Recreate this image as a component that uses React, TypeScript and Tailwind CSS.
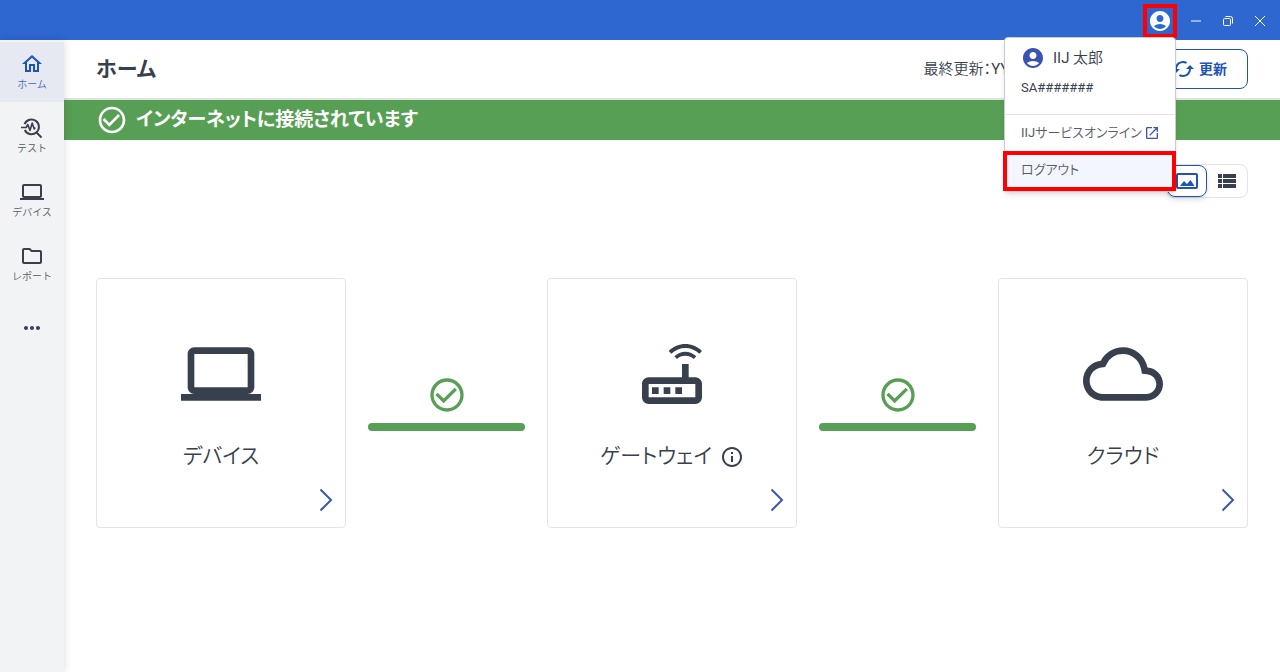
import React from 'react';
import {
  MdAccountCircle,
  MdCheckCircleOutline,
  MdInfoOutline,
  MdMoreHoriz,
  MdOpenInNew,
  MdOutlineCloud,
  MdOutlineFolder,
  MdOutlineHome,
  MdOutlineLaptop,
  MdOutlineRouter,
} from 'react-icons/md';

const DiagnoseIcon = ({ className }: { className?: string }) => (
  <svg viewBox="0 0 24 24" className={className} fill="none" stroke="currentColor" strokeWidth="2" aria-hidden="true">
    <path d="M4.6 8.2A7.4 7.4 0 1 1 4.8 14" />
    <path d="M16.5 16.5 21.5 21.5" />
    <path d="M1 11.5h5.2l1.6-3 2.2 6 2.2-7.5 2 6 1-1.5" strokeWidth="1.6" strokeLinejoin="round" />
  </svg>
);

const SyncIcon = ({ className }: { className?: string }) => (
  <svg viewBox="0 0 24 24" className={className} fill="currentColor" aria-hidden="true">
    <path d="m19 8-4 4h3c0 3.31-2.69 6-6 6-1.01 0-1.97-.25-2.8-.7l-1.46 1.46A7.93 7.93 0 0 0 12 20c4.42 0 8-3.58 8-8h3l-4-4zM6 12c0-3.31 2.69-6 6-6 1.01 0 1.97.25 2.8.7l1.46-1.46A7.93 7.93 0 0 0 12 4c-4.42 0-8 3.58-8 8H1l4 4 4-4H6z" />
  </svg>
);

const PictureIcon = ({ className }: { className?: string }) => (
  <svg viewBox="0 0 24 24" className={className} aria-hidden="true">
    <rect x="2" y="5" width="20" height="14" rx="1" fill="none" stroke="currentColor" strokeWidth="2" />
    <path d="M5 17l4-5 3 3 3.500-4 4 6z" fill="currentColor" />
  </svg>
);

const ListIcon = ({ className }: { className?: string }) => (
  <svg viewBox="0 0 24 24" className={className} fill="currentColor" aria-hidden="true">
    <path d="M3 5h4v4H3zM8 5h13v4H8zM3 10h4v4H3zM8 10h13v4H8zM3 15h4v4H3zM8 15h13v4H8z" />
  </svg>
);

const navItems = [
  { label: 'ホーム', icon: MdOutlineHome, active: true },
  { label: 'テスト', icon: DiagnoseIcon, active: false },
  { label: 'デバイス', icon: MdOutlineLaptop, active: false },
  { label: 'レポート', icon: MdOutlineFolder, active: false },
];

const TitleBar = () => (
  <div className="flex h-10 items-center justify-end bg-[#2e67d0] pt-[2px] text-white">
    <div className="relative mr-[3px]">
      <button
        type="button"
        aria-label="アカウント"
        aria-expanded="true"
        className="flex size-[34px] items-center justify-center border-4 border-[#ff0000]"
      >
        <MdAccountCircle className="size-6 shrink-0" />
      </button>
      <AccountMenu />
    </div>
    <button type="button" aria-label="最小化" className="flex h-8 w-8 items-center justify-center">
      <svg viewBox="0 0 12 12" className="size-3" stroke="currentColor" fill="none">
        <path d="M1 6h10" />
      </svg>
    </button>
    <button type="button" aria-label="元に戻す" className="flex h-8 w-8 items-center justify-center">
      <svg viewBox="0 0 12 12" className="size-3" stroke="currentColor" fill="none">
        <rect x="1.500" y="3.500" width="7" height="7" rx="1" />
        <path d="M3.500 1.500h5a2 2 0 0 1 2 2v5" />
      </svg>
    </button>
    <button type="button" aria-label="閉じる" className="mr-1 flex h-8 w-8 items-center justify-center">
      <svg viewBox="0 0 12 12" className="size-3" stroke="currentColor" fill="none">
        <path d="M1 1l10 10M11 1L1 11" />
      </svg>
    </button>
  </div>
);

const AccountMenu = () => (
  <div className="absolute top-[33px] right-[1px] z-20 w-[172px] rounded-sm border border-[#c9cbcf] bg-white text-[#3b3f4a] shadow-md">
    <div className="flex items-center gap-2 px-4 pt-2">
      <MdAccountCircle className="size-6 text-[#3a52b0]" />
      <span className="text-[15px] leading-5">
        <span className="font-normal">IIJ</span> 太郎
      </span>
    </div>
    <p className="border-b border-[#e3e4e6] px-4 pt-[10px] pb-[18px] text-[13px] leading-4 font-normal">SA#######</p>
    <a href="#" className="flex h-9 items-center gap-0.5 px-4 text-[13px] whitespace-nowrap text-[#555a66]">
      <span>
        <span className="font-normal">IIJ</span>サービスオンライン
      </span>
      <MdOpenInNew className="size-4 shrink-0 text-[#3a52b0]" />
    </a>
    <button
      type="button"
      className="-mx-[2px] flex h-10 w-[173px] items-center border-4 border-[#ff0000] bg-[#f3f6fc] px-[14px] pb-[2px] text-[13px] text-[#555a66]"
    >
      ログアウト
    </button>
  </div>
);

const Sidebar = () => (
  <nav className="z-10 flex w-16 shrink-0 flex-col gap-1 bg-[#f2f3f5] pt-[2px] shadow-[0_0_8px_rgba(0,0,0,0.15)]">
    {navItems.map(({ label, icon: Icon, active }) => (
      <a
        key={label}
        href="#"
        className={
          active
            ? 'flex h-[60px] flex-col items-center bg-[#e6e9f2] pt-[10px] text-[#1e54b7]'
            : 'flex h-[60px] flex-col items-center pt-[10px] text-[#383f4d]'
        }
      >
        <Icon className="size-6" />
        <span className="text-[10px] leading-[18px] opacity-85 [font-feature-settings:normal]">{label}</span>
      </a>
    ))}
    <button type="button" aria-label="その他" className="flex h-[60px] items-center justify-center text-[#383f4d]">
      <MdMoreHoriz className="size-6" />
    </button>
  </nav>
);

const NodeCard = ({ label, icon, info }: { label: string; icon: React.ReactNode; info?: boolean }) => (
  <a
    href="#"
    className="flex size-[250px] shrink-0 flex-col items-center rounded-sm border border-[#e3e4e6] bg-white pt-[55px] pb-[15px] text-[#383f4d]"
  >
    {icon}
    <span className="mt-7 flex items-center gap-2 text-[21px] leading-7">
      {label}
      {info && <MdInfoOutline className="mt-0.5 size-6" />}
    </span>
    <svg viewBox="0 0 14 24" className="mt-auto mr-3 h-6 w-[14px] self-end" fill="none" stroke="#3a56b0" strokeWidth="2">
      <path d="M1.500 1.500 12 12 1.500 22.500" />
    </svg>
  </a>
);

const Connector = () => (
  <div className="mx-[22px] flex flex-1 flex-col items-center gap-2">
    <MdCheckCircleOutline className="size-10 text-[#579f54]" />
    <div className="h-2 w-full rounded-full bg-[#579f54]"></div>
  </div>
);

const App: React.FC = () => {
  return (
    <div className="flex min-h-screen flex-col bg-white font-[Roboto,'Noto_Sans_CJK_JP',sans-serif] font-[350] text-[#383f4d] [font-feature-settings:'palt']">
      <TitleBar />
      <div className="flex flex-1">
        <Sidebar />

        <main className="min-w-0 flex-1">
          <header className="flex h-[60px] items-center border-b-2 border-[#e0e0e0] px-8">
            <h1 className="text-[21px] leading-8 font-bold">ホーム</h1>
            <p className="ml-auto text-[15px] leading-5 whitespace-nowrap">
              最終更新：<span className="font-normal">YYYY/MM/DD hh:mm</span>
            </p>
            <button
              type="button"
              className="ml-3.5 flex h-10 items-center gap-1 rounded-lg border border-[#1e54b7] px-5 text-sm font-bold text-[#1e54b7]"
            >
              <SyncIcon className="size-6" />
              更新
            </button>
          </header>

          <div className="flex h-10 items-center gap-2 bg-[#579f54] px-8 text-white">
            <MdCheckCircleOutline className="size-8" />
            <p className="text-[19px] font-bold">インターネットに接続されています</p>
          </div>

          <div className="px-8 pt-6">
            <div className="flex justify-end">
              <div className="flex rounded-lg border border-[#e3e4e6]">
                <button
                  type="button"
                  aria-label="図で表示"
                  className="flex h-8 w-10 items-center justify-center rounded-lg border border-[#1e54b7] text-[#1e54b7] shadow-md"
                >
                  <PictureIcon className="size-6" />
                </button>
                <button type="button" aria-label="一覧で表示" className="flex h-8 w-10 items-center justify-center">
                  <ListIcon className="size-6" />
                </button>
              </div>
            </div>

            <div className="mt-20 flex items-center">
              <NodeCard label="デバイス" icon={<MdOutlineLaptop className="size-20" />} />
              <Connector />
              <NodeCard label="ゲートウェイ" icon={<MdOutlineRouter className="size-20" />} info />
              <Connector />
              <NodeCard label="クラウド" icon={<MdOutlineCloud className="size-20" />} />
            </div>
          </div>
        </main>
      </div>
    </div>
  );
};

export default App;
